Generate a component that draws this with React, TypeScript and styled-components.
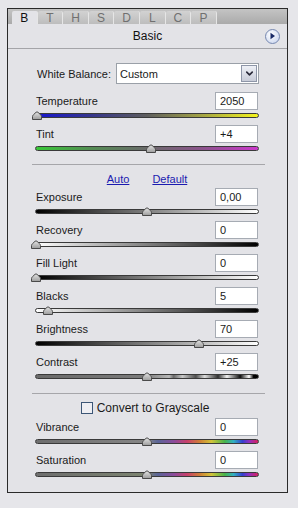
import React from 'react'
import styled, { createGlobalStyle } from 'styled-components'
import { ChevronDown } from 'lucide-react'

const GlobalStyle = createGlobalStyle`
    html, body {
        margin: 0;
        padding: 0;
        background: #e6e6ea;
    }
    body {
        font-family: 'Liberation Sans', Arial, sans-serif;
        font-size: 11px;
        color: #1a1a1a;
    }
    * {
        box-sizing: border-box;
    }
`

const Panel = styled.div`
    width: 281px;
    height: 485px;
    margin: 8px 0 0 7px;
    border: 1px solid #2a2a2a;
    background: #e3e3e7;
    display: flex;
    flex-direction: column;
`
const TabStrip = styled.div`
    height: 15px;
    display: flex;
    align-items: flex-end;
    padding-left: 4px;
    background: linear-gradient(#c4c4c4, #aaaaaa);
`
const Tab = styled.div<{ active?: boolean }>`
    width: 25.6px;
    height: 13px;
    display: flex;
    align-items: center;
    justify-content: center;
    font-size: 12px;
    color: ${props => props.active ? '#111' : '#707070'};
    background: ${props => props.active ? '#e3e3e7' : 'linear-gradient(#d2d2d2, #bdbdbd)'};
    border-right: 1px solid #e6e6e6;
    border-radius: 2px 2px 0 0;
`
const Header = styled.div`
    height: 25px;
    display: grid;
    grid-template-columns: 1fr auto 1fr;
    align-items: center;
    border-bottom: 1px solid #a4a4a8;
    font-size: 12px;
    color: #111;
`
const PlayButton = styled.div`
    justify-self: end;
    margin-right: 7px;
    width: 15px;
    height: 15px;
    border-radius: 50%;
    border: 1px solid #7688b0;
    background: radial-gradient(circle at 40% 35%, #ffffff, #c4d0ec);
    display: flex;
    align-items: center;
    justify-content: center;
`
const Body = styled.div`
    flex: 1;
    display: flex;
    flex-direction: column;
    padding: 14px 28px 0 27px;
`
const BalanceRow = styled.div`
    display: flex;
    align-items: center;
    height: 21px;
    margin-bottom: 8px;
`
const BalanceLabel = styled.span`
    flex: 1;
    padding-left: 2px;
`
const Select = styled.div`
    width: 143px;
    height: 21px;
    display: flex;
    align-items: center;
    justify-content: space-between;
    background: #fff;
    border: 1px solid #9aa0a8;
    padding: 0 1px 0 3px;
`
const SelectButton = styled.div`
    width: 16px;
    height: 17px;
    display: flex;
    align-items: center;
    justify-content: center;
    background: linear-gradient(#eef0f6, #c8ccd8);
    border: 1px solid #8e96a8;
`
const Row = styled.div`
    display: flex;
    flex-direction: column;
    height: 33px;
`
const RowHead = styled.div`
    display: flex;
    align-items: center;
    justify-content: space-between;
    height: 18px;
`
const Label = styled.span`
    padding-left: 1px;
`
const ValueBox = styled.div`
    width: 43px;
    height: 18px;
    margin-right: 1px;
    background: #fff;
    border: 1px solid #a6abb3;
    padding: 0 4px;
    line-height: 16px;
`
const SliderArea = styled.div`
    position: relative;
    height: 15px;
    padding-top: 3px;
`
const Track = styled.div<{ fill: string }>`
    height: 5px;
    border: 1px solid #3a3a3a;
    border-radius: 3px;
    background: ${props => props.fill};
`
const Thumb = styled.svg`
    position: absolute;
    top: 1px;
    margin-left: -6px;
`
const Separator = styled.div<{ top: number }>`
    height: 1px;
    background: #a6a6aa;
    margin: ${props => props.top}px -6px 0 -3px;
`
const Links = styled.div`
    display: flex;
    justify-content: center;
    gap: 23px;
    height: 14px;
    margin: 7px 0 2px;
    line-height: 14px;
`
const Link = styled.span`
    color: #1b1bb0;
    text-decoration: underline;
`
const CheckRow = styled.div`
    display: flex;
    justify-content: center;
    align-items: center;
    gap: 4px;
    height: 12px;
    margin: 8px 0 4px;
    padding-right: 4px;
    font-size: 12px;
`
const Checkbox = styled.div`
    width: 12px;
    height: 12px;
    border: 1px solid #3c5676;
    background: #eeeef2;
`

const spectrum = (left: string) =>
    `linear-gradient(to right, #6e6e6e, ${left} 50%, #5a6498 55%, #8a4c9c 62%, #c8406c 68%, #d08236 74%, #d2c43a 79%, #48b44a 85%, #32b0c2 89%, #3440d0 93%, #9030c0 96%, #d8205c)`

const contrastFill = 'linear-gradient(to right, #6a6a6a, #7a7a7a 48%, #8a8a8a 52%, #a0a0a0 56%, #b8b8b8 60%, #6a6a6a 62%, #c8c8c8 66%, #505050 72%, #dcdcdc 76%, #303030 82%, #f0f0f0 86%, #101010 92%, #ffffff 96%, #000000 98%)'

type Slider = { label: string, value: string, pos: number, fill: string }

const topSliders: Slider[] = [
    { label: 'Temperature', value: '2050', pos: 0.8, fill: 'linear-gradient(to right, #1616d0, #36368c 25%, #5e5e5e 50%, #a4a444 75%, #f4f41c)' },
    { label: 'Tint', value: '+4', pos: 51.6, fill: 'linear-gradient(to right, #38c838, #548c54 25%, #6a6a6a 50%, #8c548c 75%, #cc38cc)' },
]

const toneSliders: Slider[] = [
    { label: 'Exposure', value: '0,00', pos: 49.8, fill: 'linear-gradient(to right, #000, #fff)' },
    { label: 'Recovery', value: '0', pos: 0.5, fill: 'linear-gradient(to right, #fff, #000)' },
    { label: 'Fill Light', value: '0', pos: 0.5, fill: 'linear-gradient(to right, #000, #fff)' },
    { label: 'Blacks', value: '5', pos: 5.8, fill: 'linear-gradient(to right, #fff, #000)' },
    { label: 'Brightness', value: '70', pos: 73, fill: 'linear-gradient(to right, #000, #fff)' },
    { label: 'Contrast', value: '+25', pos: 50, fill: contrastFill },
]

const colorSliders: Slider[] = [
    { label: 'Vibrance', value: '0', pos: 50, fill: spectrum('#868686') },
    { label: 'Saturation', value: '0', pos: 50, fill: spectrum('#7c8470') },
]

const tabs = ['B', 'T', 'H', 'S', 'D', 'L', 'C', 'P']

const SliderRow = ({ label, value, pos, fill }: Slider) => (
    <Row>
        <RowHead>
            <Label>{label}</Label>
            <ValueBox>{value}</ValueBox>
        </RowHead>
        <SliderArea>
            <Track fill={fill} />
            <Thumb width="12" height="9" viewBox="0 0 12 9" style={{ left: `${pos}%` }}>
                <defs>
                    <linearGradient id="thumbFill" x1="0" y1="0" x2="0" y2="1">
                        <stop offset="0" stopColor="#e4e4e4" />
                        <stop offset="1" stopColor="#9c9c9c" />
                    </linearGradient>
                </defs>
                <path
                    d="M1.5 8.5 L1.5 5.6 Q1.5 4.6 2.4 3.8 L5 1.3 Q6 0.5 7 1.3 L9.6 3.8 Q10.5 4.6 10.5 5.6 L10.5 8.5 Z"
                    fill="url(#thumbFill)"
                    stroke="#4a4a4a"
                    strokeWidth="1"
                />
            </Thumb>
        </SliderArea>
    </Row>
)

export default function App() {
    return (
        <>
            <GlobalStyle />
            <Panel>
                <TabStrip>
                    {tabs.map((t, i) => <Tab key={t} active={i === 0}>{t}</Tab>)}
                </TabStrip>
                <Header>
                    <span />
                    <span>Basic</span>
                    <PlayButton>
                        <svg width="7" height="8" viewBox="0 0 7 8">
                            <path d="M1.5 0.8 L6 4 L1.5 7.2 Z" fill="#1a2a66" />
                        </svg>
                    </PlayButton>
                </Header>
                <Body>
                    <BalanceRow>
                        <BalanceLabel>White Balance:</BalanceLabel>
                        <Select>
                            <span>Custom</span>
                            <SelectButton>
                                <ChevronDown size={11} strokeWidth={3.5} color="#2a2a3a" />
                            </SelectButton>
                        </Select>
                    </BalanceRow>
                    {topSliders.map(s => <SliderRow key={s.label} {...s} />)}
                    <Separator top={6} />
                    <Links>
                        <Link>Auto</Link>
                        <Link>Default</Link>
                    </Links>
                    {toneSliders.map(s => <SliderRow key={s.label} {...s} />)}
                    <Separator top={7} />
                    <CheckRow>
                        <Checkbox />
                        <span>Convert to Grayscale</span>
                    </CheckRow>
                    {colorSliders.map(s => <SliderRow key={s.label} {...s} />)}
                </Body>
            </Panel>
        </>
    )
}
